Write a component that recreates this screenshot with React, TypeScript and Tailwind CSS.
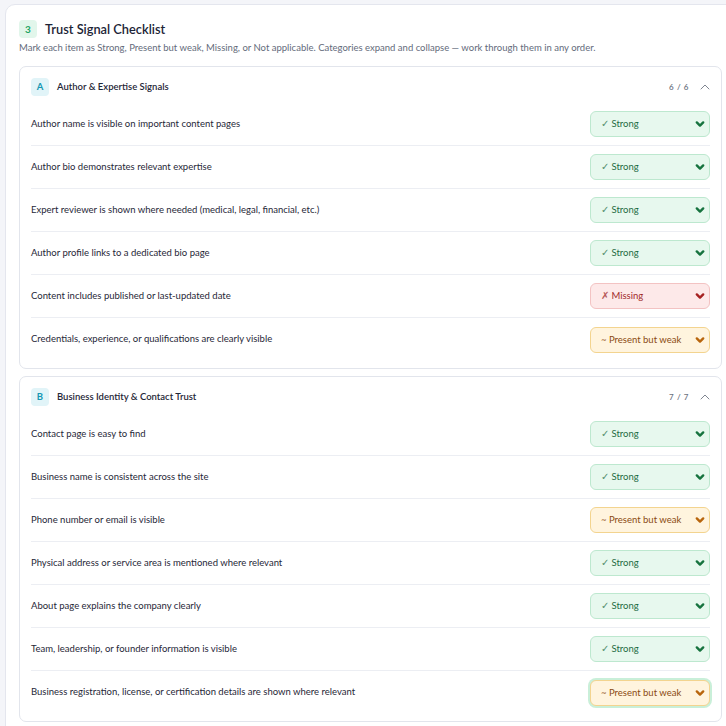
import React from "react";
import { ChevronUp } from "lucide-react";

type Status = "strong" | "weak" | "missing";

const styles: Record<Status, { box: string; label: string; mark: string; chev: string; text: string }> = {
  strong: {
    box: "bg-[#e7f8ee] border-[#bde8cf]",
    label: "Strong",
    mark: "✓",
    chev: "text-[#17733f]",
    text: "text-[#1d6b43]",
  },
  weak: {
    box: "bg-[#fff4de] border-[#f3d48f]",
    label: "Present but weak",
    mark: "~",
    chev: "text-[#b8650c]",
    text: "text-[#8a4a12]",
  },
  missing: {
    box: "bg-[#fde9e9] border-[#f3c3c3]",
    label: "Missing",
    mark: "✗",
    chev: "text-[#a52121]",
    text: "text-[#a12a2a]",
  },
};

const categories: { letter: string; title: string; count: string; items: [string, Status][] }[] = [
  {
    letter: "A",
    title: "Author & Expertise Signals",
    count: "6 / 6",
    items: [
      ["Author name is visible on important content pages", "strong"],
      ["Author bio demonstrates relevant expertise", "strong"],
      ["Expert reviewer is shown where needed (medical, legal, financial, etc.)", "strong"],
      ["Author profile links to a dedicated bio page", "strong"],
      ["Content includes published or last-updated date", "missing"],
      ["Credentials, experience, or qualifications are clearly visible", "weak"],
    ],
  },
  {
    letter: "B",
    title: "Business Identity & Contact Trust",
    count: "7 / 7",
    items: [
      ["Contact page is easy to find", "strong"],
      ["Business name is consistent across the site", "strong"],
      ["Phone number or email is visible", "weak"],
      ["Physical address or service area is mentioned where relevant", "strong"],
      ["About page explains the company clearly", "strong"],
      ["Team, leadership, or founder information is visible", "strong"],
      ["Business registration, license, or certification details are shown where relevant", "weak"],
    ],
  },
];

function BoldChevron({ className }: { className: string }) {
  return (
    <svg viewBox="0 0 10 10" className={className} fill="none">
      <polyline points="1.8,3.4 5,6.6 8.2,3.4" stroke="currentColor" strokeWidth="2.4" strokeLinecap="round" strokeLinejoin="round" />
    </svg>
  );
}

function StatusSelect({ status, focused }: { status: Status; focused?: boolean }) {
  const s = styles[status];
  return (
    <div
      className={`relative w-[120px] h-[26px] rounded-[6px] border flex items-center pl-[10px] pr-[4px] ${s.box} ${
        focused ? "ring-2 ring-[#c9efd9]" : ""
      }`}
    >
      <span className={`text-[9.5px] flex-1 leading-none ${s.text}`}>
        <span className="opacity-75">{s.mark}</span> {s.label}
      </span>
      <BoldChevron className={`w-[10px] h-[10px] ${s.chev}`} />
    </div>
  );
}

export default function App() {
  return (
    <div
      className="w-[726px] h-[726px] overflow-hidden bg-[#f4f5f9] pl-[5px] pt-[4px]"
      style={{ fontFamily: "Lato, 'Liberation Sans', sans-serif" }}
    >
      <div className="w-[731px] bg-white border border-[#e4e6ee] rounded-[10px] pt-[15px] px-[13px] pb-[20px]">
        <div className="flex items-center gap-[8px] h-[18px]">
          <div className="w-[18px] h-[18px] rounded-[4px] bg-[#e2f6eb] text-[#23a464] text-[10px] font-bold flex items-center justify-center">
            3
          </div>
          <h2 className="text-[12.8px] font-semibold text-[#1c2436] leading-none">Trust Signal Checklist</h2>
        </div>
        <p className="mt-[3px] text-[9.5px] text-[#646b7b] leading-[14px]">
          Mark each item as Strong, Present but weak, Missing, or Not applicable. Categories expand and collapse — work
          through them in any order.
        </p>
        <div className="mt-[11px] flex flex-col gap-[7px]">
          {categories.map((c) => (
            <div key={c.letter} className="border border-[#e2e5ec] rounded-[7px] bg-white pt-[11px] pb-[7px] px-[11px]">
              <div className="flex items-center h-[18px] mb-[7px]">
                <div className="w-[18px] h-[18px] rounded-[4px] bg-[#e1f4f8] text-[#1597b2] text-[9.5px] font-bold flex items-center justify-center">
                  {c.letter}
                </div>
                <span className="ml-[8px] text-[9.5px] font-semibold text-[#1f2737]">{c.title}</span>
                <span className="ml-auto text-[8px] font-semibold text-[#6b7280] tracking-[0.6px]">{c.count}</span>
                <ChevronUp className="ml-[8px] mr-[-3px] w-[16px] h-[16px] text-[#6b7280]" strokeWidth={1.3} />
              </div>
              <div className="flex flex-col">
                {c.items.map(([t, st], i) => (
                  <div
                    key={t}
                    className={`h-[43px] flex items-center justify-between ${
                      i < c.items.length - 1 ? "border-b border-[#eceef3]" : ""
                    }`}
                  >
                    <span className="text-[9.5px] text-[#1f2737]">{t}</span>
                    <StatusSelect status={st} focused={c.letter === "B" && i === c.items.length - 1} />
                  </div>
                ))}
              </div>
            </div>
          ))}
        </div>
      </div>
    </div>
  );
}
